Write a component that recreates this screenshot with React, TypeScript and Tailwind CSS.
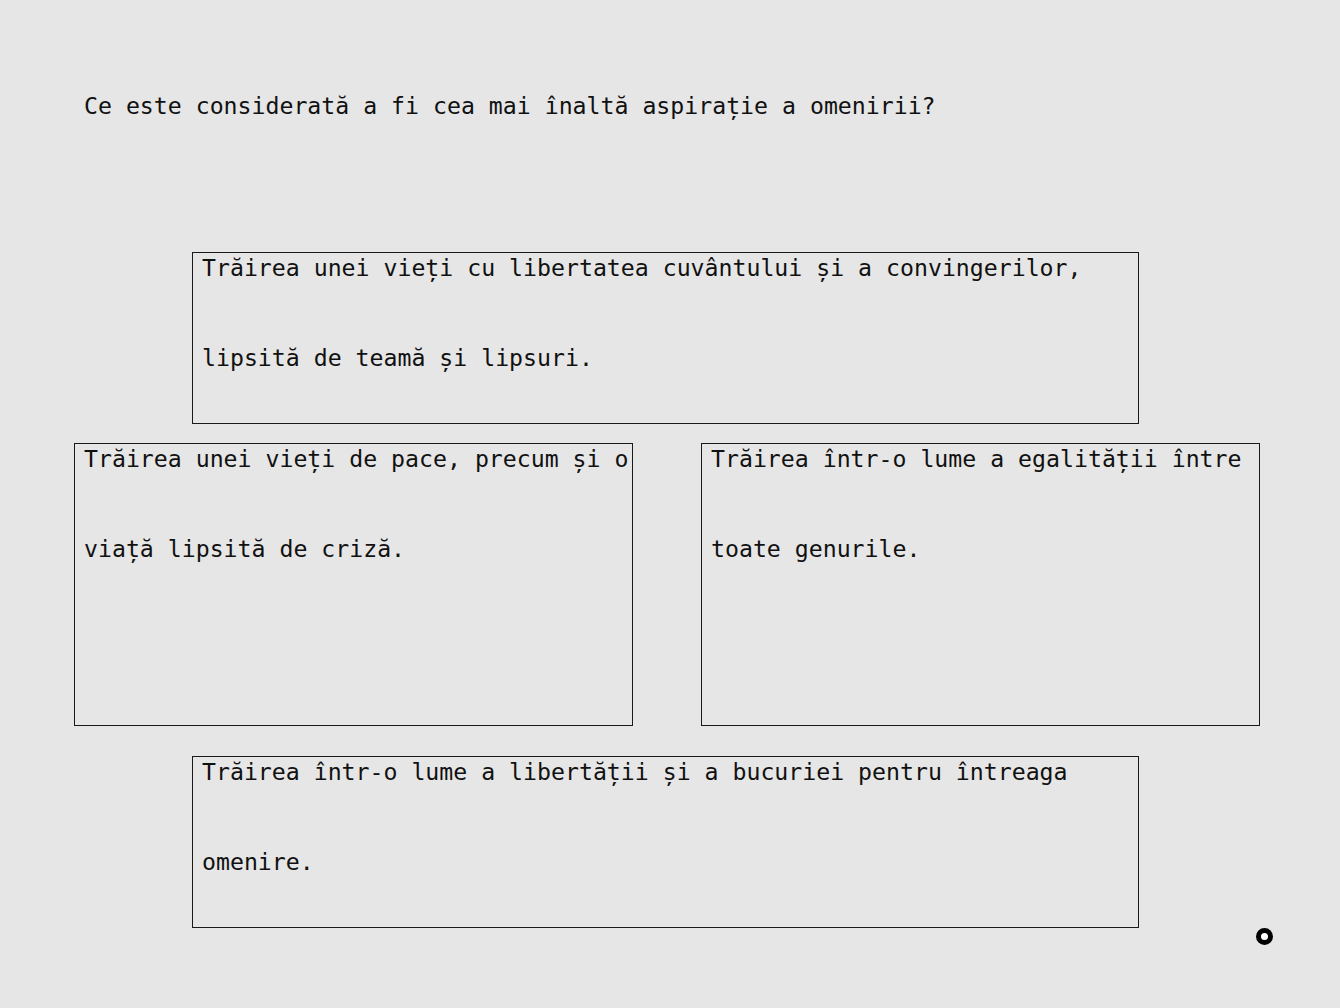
const mono = { fontFamily: '"DejaVu Sans Mono", "Liberation Mono", monospace' };

function Answer({ first, second, className }: { first: string; second: string; className: string }) {
  return (
    <div className={`border border-[#1a1a1a] px-[9px] text-[23.2px] text-[#111] ${className}`}>
      <div className="leading-[30px] whitespace-nowrap">{first}</div>
      <div className="leading-[30px] mt-[60px] whitespace-nowrap">{second}</div>
    </div>
  );
}

export default function App() {
  return (
    <div className="relative w-[1340px] h-[1008px] bg-[#e6e6e6] overflow-hidden" style={mono}>
      <div className="pt-[91px] pl-[84px] text-[23.2px] leading-[30px] text-[#111]">
        Ce este considerată a fi cea mai înaltă aspirație a omenirii?
      </div>

      <div className="mt-[131px] flex flex-col">
        <Answer
          className="ml-[192px] w-[947px] h-[172px]"
          first="Trăirea unei vieți cu libertatea cuvântului și a convingerilor,"
          second="lipsită de teamă și lipsuri."
        />
        <div className="mt-[19px] flex gap-[68px] ml-[74px]">
          <Answer
            className="w-[559px] h-[283px] overflow-hidden"
            first="Trăirea unei vieți de pace, precum și o"
            second="viață lipsită de criză."
          />
          <Answer
            className="w-[559px] h-[283px] overflow-hidden"
            first="Trăirea într-o lume a egalității între"
            second="toate genurile."
          />
        </div>
        <Answer
          className="mt-[30px] ml-[192px] w-[947px] h-[172px]"
          first="Trăirea într-o lume a libertății și a bucuriei pentru întreaga"
          second="omenire."
        />
      </div>

      <div className="absolute left-[1256px] top-[928px] w-[17px] h-[17px] rounded-full border-[5px] border-black bg-white" />
    </div>
  );
}
